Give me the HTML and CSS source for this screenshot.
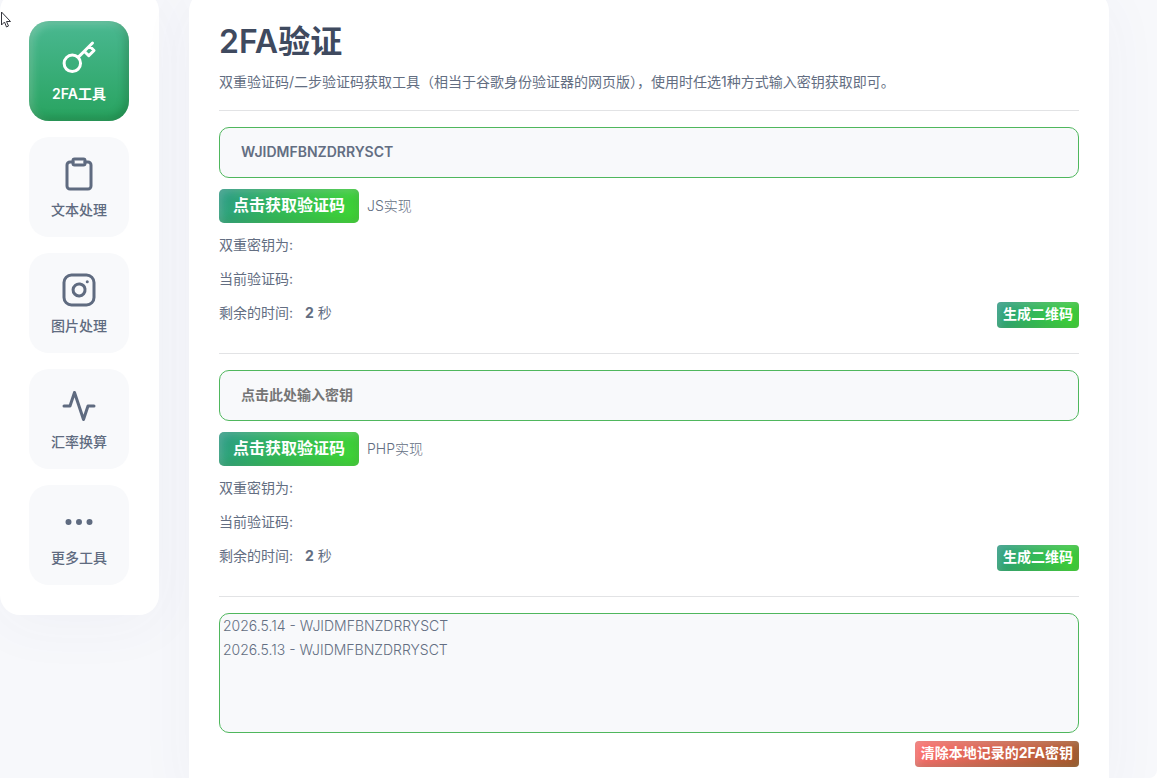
FILE: index.html
```html
<!DOCTYPE html>
<html lang="zh-CN">
<head>
    <meta charset="UTF-8">
    <meta name="viewport" content="width=device-width, initial-scale=1.0">
    <title>2FA验证</title>
    <link rel="stylesheet" href="styles.css">
</head>
<body>
    <div class="page">
        <nav class="sidebar">
            <a class="nav-item active" href="#">
                <svg class="icon" viewBox="0 0 24 24"><path d="M21 2l-2 2m-7.61 7.61a5.5 5.5 0 1 1-7.778 7.778 5.5 5.5 0 0 1 7.777-7.777zm0 0L15.5 7.5m0 0l3 3L22 7l-3-3m-3.5 3.5L19 4"/></svg>
                <span>2FA工具</span>
            </a>
            <a class="nav-item" href="#">
                <svg class="icon" viewBox="0 0 24 24"><path d="M16 4h2a2 2 0 0 1 2 2v14a2 2 0 0 1-2 2H6a2 2 0 0 1-2-2V6a2 2 0 0 1 2-2h2"/><rect x="8" y="2" width="8" height="4" rx="1"/></svg>
                <span>文本处理</span>
            </a>
            <a class="nav-item" href="#">
                <svg class="icon" viewBox="0 0 24 24"><rect x="2" y="2" width="20" height="20" rx="5"/><path d="M16 11.37A4 4 0 1 1 12.63 8 4 4 0 0 1 16 11.37z"/><path d="M17.5 6.5h.01"/></svg>
                <span>图片处理</span>
            </a>
            <a class="nav-item" href="#">
                <svg class="icon" viewBox="0 0 24 24"><polyline points="22 12 18 12 15 21 9 3 6 12 2 12"/></svg>
                <span>汇率换算</span>
            </a>
            <a class="nav-item" href="#">
                <svg class="icon" viewBox="0 0 24 24"><circle cx="12" cy="12" r="1"/><circle cx="19" cy="12" r="1"/><circle cx="5" cy="12" r="1"/></svg>
                <span>更多工具</span>
            </a>
        </nav>

        <main class="content">
            <h1>2FA验证</h1>
            <p class="desc">双重验证码/二步验证码获取工具（相当于谷歌身份验证器的网页版），使用时任选1种方式输入密钥获取即可。</p>
            <hr>

            <section class="tool">
                <input class="secret" type="text" aria-label="密钥 (JS)" value="WJIDMFBNZDRRYSCT">
                <div class="action">
                    <button class="btn btn-large" type="button">点击获取验证码</button>
                    <span class="method">JS实现</span>
                </div>
                <p>双重密钥为:</p>
                <p>当前验证码:</p>
                <div class="remain">
                    <p>剩余的时间: <b>2</b> 秒</p>
                    <button class="btn" type="button">生成二维码</button>
                </div>
            </section>
            <hr>

            <section class="tool">
                <input class="secret" type="text" aria-label="密钥 (PHP)" placeholder="点击此处输入密钥">
                <div class="action">
                    <button class="btn btn-large" type="button">点击获取验证码</button>
                    <span class="method">PHP实现</span>
                </div>
                <p>双重密钥为:</p>
                <p>当前验证码:</p>
                <div class="remain">
                    <p>剩余的时间: <b>2</b> 秒</p>
                    <button class="btn" type="button">生成二维码</button>
                </div>
            </section>
            <hr>

            <textarea class="history" aria-label="本地记录">2026.5.14 - WJIDMFBNZDRRYSCT
2026.5.13 - WJIDMFBNZDRRYSCT</textarea>
            <div class="clear">
                <button class="btn btn-danger" type="button">清除本地记录的2FA密钥</button>
            </div>
        </main>
    </div>

    <svg class="cursor" viewBox="0 0 12 18"><path d="M1.5 1v13l3-3 2 5 2-1-2-4.500h4z"/></svg>
</body>
</html>
```
FILE: styles.css
```css
* {
    box-sizing: border-box;
}
html {
    background: #fff;
}
body {
    margin: 0;
    font-family: Inter, "Noto Sans CJK SC", sans-serif;
    font-size: 14px;
    line-height: 24px;
    color: #636e82;
}
.page {
    display: flex;
    align-items: flex-start;
    gap: 30px;
    height: 100vh;
    padding-right: 48px;
    overflow: hidden;
    background: #f7f8fb;
    border-radius: 0 0 8px 0;
}
.sidebar, .content {
    margin-top: -9px;
    padding: 30px;
    background: #fff;
    border-radius: 20px;
    box-shadow: 0 10px 60px rgba(70, 80, 130, 0.045);
}
.sidebar {
    display: flex;
    flex-direction: column;
    gap: 16px;
    padding-left: 29px;
}
.nav-item {
    display: flex;
    flex-direction: column;
    align-items: center;
    gap: 8px;
    width: 100px;
    height: 100px;
    padding-top: 19px;
    border-radius: 20px;
    background: #f8f9fb;
    color: #5f6b80;
    font-weight: 500;
    line-height: 20px;
    text-decoration: none;
}
.nav-item.active {
    background: linear-gradient(#4ab891, #28a35f);
    box-shadow: inset -3px -3px 8px rgba(0, 70, 20, 0.3), inset 3px 3px 8px rgba(255, 255, 255, 0.25);
    color: #fff;
    font-weight: 600;
}
.icon {
    width: 36px;
    height: 36px;
    fill: none;
    stroke: currentColor;
    stroke-width: 2;
    stroke-linecap: round;
    stroke-linejoin: round;
}
.content {
    flex: 1;
    min-width: 0;
}
h1 {
    margin: 0 0 7px;
    font-size: 32px;
    line-height: 42px;
    font-weight: 600;
    color: #3f4a5f;
}
p {
    margin: 0;
}
hr {
    margin: 16px 0;
    border: 0;
    border-top: 1px solid #e2e3e5;
}
.tool {
    display: flex;
    flex-direction: column;
    gap: 10px;
    padding-bottom: 9px;
}
.secret, .history {
    display: block;
    width: 100%;
    border: 1px solid #4fb75d;
    border-radius: 10px;
    background: #f8f9fb;
    color: #636e82;
    font: inherit;
    outline: none;
}
.secret {
    height: 51px;
    margin-bottom: 1px;
    padding: 0 21px 2px;
    font-weight: 600;
}
.secret::placeholder {
    color: #757575;
}
.action {
    display: flex;
    align-items: center;
    gap: 8px;
}
.method {
    font-weight: 300;
}
.remain {
    display: flex;
    justify-content: space-between;
    align-items: flex-end;
    min-height: 27px;
}
.remain p {
    align-self: flex-start;
}
.remain b {
    margin-left: 8px;
}
.btn {
    height: 26px;
    padding: 0 6px 2px;
    border: 0;
    border-radius: 4px;
    background: linear-gradient(120deg, #2b9a88, #34bb54 50%, #41d832);
    box-shadow: inset -2px -2px 8px rgba(0, 70, 20, 0.2), inset 2px 2px 8px rgba(255, 255, 255, 0.25);
    color: #fff;
    font: bold 14px/24px Inter, "Noto Sans CJK SC", sans-serif;
    cursor: pointer;
}
.btn-large {
    height: 34px;
    padding: 0 14px 2px;
    border-radius: 5px;
    font-size: 16px;
}
.btn-danger {
    background: linear-gradient(120deg, #ff7070, #a95a2c);
}
.history {
    height: 120px;
    padding: 0 3px;
    font-weight: 300;
    resize: none;
}
.clear {
    display: flex;
    justify-content: flex-end;
    margin-top: 8px;
}
.cursor {
    position: absolute;
    top: 11px;
    left: 0;
    width: 12px;
    height: 18px;
    fill: #fff;
    stroke: #33343c;
    stroke-width: 1;
}
```
